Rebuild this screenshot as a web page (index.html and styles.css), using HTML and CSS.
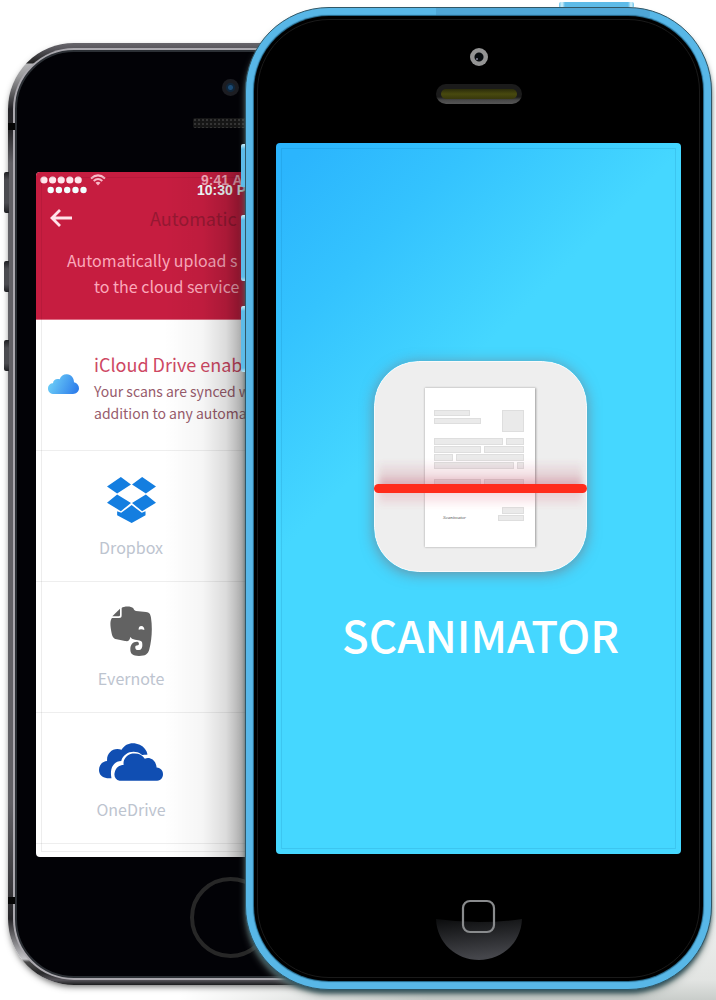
FILE: index.html
```html
<!DOCTYPE html>
<html lang="en">
<head>
<meta charset="utf-8">
<meta name="viewport" content="width=device-width, initial-scale=1">
<title>Scanimator</title>
<link rel="stylesheet" href="styles.css">
</head>
<body>
<main class="stage">
  <section class="phone-back">
    <span class="key key-mute"></span>
    <span class="key key-up"></span>
    <span class="key key-down"></span>
    <span class="antenna antenna-top"></span>
    <span class="antenna antenna-bottom"></span>
    <div class="rim">
      <div class="face-back">
        <div class="bezel-top-back">
          <span class="lens-back"></span>
          <span class="grille"></span>
        </div>
        <div class="screen-back">
          <header class="app-header">
            <div class="status status-app">
              <svg class="dots" width="42" height="8" viewBox="0 0 42 8" fill="#ffe6ec"><circle cx="4" cy="4" r="3.6"/><circle cx="12.6" cy="4" r="3.6"/><circle cx="21.2" cy="4" r="3.6"/><circle cx="29.8" cy="4" r="3.6"/><circle cx="38.2" cy="4" r="3.6"/></svg>
              <svg class="wifi" width="16" height="12" viewBox="0 0 16 12" fill="none" stroke="#f9b9c8" stroke-width="2"><path d="M1 4.5Q8-1.8 15 4.5M3.7 7Q8 3 12.3 7"/><path d="M5.5 8.7Q8 6.700 10.500 8.700L8 11.500Z" fill="#f9b9c8" stroke="none"/></svg>
              <span class="clock-app">9:41 A</span>
            </div>
            <div class="status status-phone">
              <svg class="dots" width="40" height="8" viewBox="0 0 40 8" fill="#f2ffff"><circle cx="3.700" cy="4" r="3.200"/><circle cx="11.900" cy="4" r="3.200"/><circle cx="20.200" cy="4" r="3.200"/><circle cx="28.500" cy="4" r="3.200"/><circle cx="36.500" cy="4" r="3.200"/></svg>
              <span class="clock-phone">10:30 P</span>
            </div>
            <div class="nav">
              <button class="back" aria-label="Back"><svg width="24" height="18" viewBox="0 0 24 18" fill="none" stroke="#ffe3ea" stroke-width="2.800"><path d="M10 1L2 9L10 17M2 9H22"/></svg></button>
              <h1 class="nav-title">Automatic</h1>
            </div>
            <p class="intro"><span class="intro-one">Automatically upload s</span><span class="intro-two">to the cloud service</span></p>
          </header>
          <div class="drive">
            <svg class="drive-icon" width="31" height="20" viewBox="0 0 93 60"><defs><linearGradient id="sky" x1="0" y1=".3" x2="1" y2=".6"><stop offset="0" stop-color="#70d3f8"/><stop offset="1" stop-color="#2f7feb"/></linearGradient></defs><path fill="url(#sky)" d="M19 60C7 60 0 53 0 44C0 34 7 28 15 28C15 18 25 12 35 16C39 5 48 0 57 1C70 2 78 12 78 25C87 27 93 34 93 43C93 53 85 60 75 60Z"/></svg>
            <div class="drive-text">
              <h2 class="drive-title">iCloud Drive enab</h2>
              <p class="drive-note">Your scans are synced w<br>addition to any automa</p>
            </div>
          </div>
          <ul class="services">
            <li class="service">
              <span class="service-icon"><svg width="49" height="46" viewBox="0 0 145 136" fill="#147ee0"><path d="M41 0L71 22L30 49L0 28ZM104 0L74 22L115 49L145 28ZM30 52L71 77L41 101L0 76ZM115 52L74 77L104 101L145 76ZM73 83L103 106L114 101V113L73 136L30 113V101L42 106Z"/></svg></span>
              <span class="service-name">Dropbox</span>
            </li>
            <li class="service">
              <span class="service-icon"><svg width="42" height="50" viewBox="0 0 126 150"><path fill="#626262" d="M35 6C40 1 63-1 70 7C72 11 73 14 78 15L108 18C118 19 121 23 123 35C128 67 125 104 118 130C114 145 106 150 87 150C68 150 61 144 61 130C61 115 69 106 82 107C88 108 88 117 84 118C77 118 75 121 76 126C77 132 82 133 88 132C98 131 98 117 96 108C94 102 78 103 66 98L61 93C59 103 56 107 45 105L20 100C9 97 7 92 4 77C0 56 0 43 6 36L27 36C34 36 35 33 35 27Z"/><path fill="#626262" d="M7 31L30 8V27Q30 31 26 31Z"/><path fill="#fff" d="M86 71Q85 61 94 60Q103 61 103 72Q94 68 86 71Z"/></svg></span>
              <span class="service-name">Evernote</span>
            </li>
            <li class="service">
              <span class="service-icon"><svg width="64" height="38" viewBox="0 0 190 112" fill="#104eb2"><path d="M37 104H24C9 103 0 93 0 80C0 65 10 54 24 53C22 29 43 11 67 20C79-2 103-4 121 5C134 11 142 22 144 34C132 35 127 36 125 33C105 18 73 27 66 53C43 54 31 75 37 104Z"/><path d="M61 112C49 109 43 98 47 86C50 72 61 65 73 65C71 48 83 34 99 31C116 29 128 34 136 46C153 40 169 51 171 72C184 73 190 82 190 92C190 104 181 112 168 112Z"/></svg></span>
              <span class="service-name">OneDrive</span>
            </li>
          </ul>
        </div>
        <div class="bezel-bottom-back"><button class="home-ring" aria-label="Home"></button></div>
      </div>
    </div>
  </section>

  <section class="phone-front">
    <span class="power"></span>
    <span class="tab tab-mute"></span>
    <span class="tab tab-up"></span>
    <span class="tab tab-down"></span>
    <div class="face-front">
      <div class="bezel-top-front">
        <span class="lens-front"></span>
        <span class="speaker"><span class="mesh"></span></span>
      </div>
      <div class="screen-front">
        <svg class="app-icon" width="213" height="211" viewBox="0 0 213 211">
          <defs>
            <linearGradient id="glow-up" x1="0" y1="0" x2="0" y2="1"><stop offset="0" stop-color="#b94960" stop-opacity="0"/><stop offset=".55" stop-color="#b94960" stop-opacity=".16"/><stop offset="1" stop-color="#b94960" stop-opacity=".42"/></linearGradient>
            <linearGradient id="glow-down" x1="0" y1="0" x2="0" y2="1"><stop offset="0" stop-color="#dd6076" stop-opacity=".25"/><stop offset="1" stop-color="#dd6076" stop-opacity="0"/></linearGradient>
            <filter id="soft" x="-10%" y="-10%" width="120%" height="120%"><feGaussianBlur stdDeviation="1"/></filter>
            <filter id="haze" x="-5%" y="-30%" width="110%" height="160%"><feGaussianBlur stdDeviation="3 1"/></filter>
          </defs>
          <rect x=".5" y=".5" width="212" height="210" rx="44" fill="#eee" stroke="#fafafa"/>
          <rect x="51" y="27" width="111" height="159" fill="#777" filter="url(#soft)" opacity=".7"/>
          <rect x="51" y="27" width="110" height="159" fill="#fff"/>
          <g fill="#dedede">
            <path d="M60 49h36v6h-36zM60 57h47v6h-47zM128 49h22v22h-22z"/>
            <path d="M60 77h69v7h-69zM132 77h18v7h-18zM60 85h47v7h-47zM110 85h40v7h-40zM60 93h19v7h-19zM82 93h68v7h-68zM60 101h80v7h-80zM143 101h7v7h-7z"/>
            <path d="M60 118h47v7h-47zM110 118h40v7h-40zM128 146h22v7h-22zM124 154h26v6h-26z"/>
          </g>
          <g fill="#eaeaea">
            <path d="M61 50h34v4h-34zM61 58h45v4h-45zM129 50h20v20h-20z"/>
            <path d="M61 78h67v5h-67zM133 78h16v5h-16zM61 86h45v5h-45zM111 86h38v5h-38zM61 94h17v5h-17zM83 94h66v5h-66zM61 102h78v5h-78zM144 102h5v5h-5z"/>
            <path d="M61 119h45v5h-45zM111 119h38v5h-38zM129 147h20v5h-20zM125 155h24v4h-24z"/>
          </g>
          <text class="signature" x="69" y="158">Scanimator</text>
          <rect x="5" y="98" width="203" height="27" fill="url(#glow-up)" filter="url(#haze)"/>
          <rect x="5" y="130" width="203" height="18" fill="url(#glow-down)" filter="url(#haze)"/>
          <rect x="0" y="123" width="213" height="9" rx="4.500" fill="#ff2b1b"/>
        </svg>
        <h2 class="brand">SCANIMATOR</h2>
      </div>
      <div class="bezel-bottom-front">
        <button class="home-front" aria-label="Home"><svg width="86" height="62" viewBox="0 0 86 62"><defs><linearGradient id="dish" x1="0" y1="0" x2=".2" y2="1"><stop offset="0" stop-color="#0b0c0d"/><stop offset="1" stop-color="#45464b"/></linearGradient></defs><path fill="url(#dish)" d="M0 20Q43 26 86 20C85 44 66 61 43 61S1 44 0 20Z"/><rect x="27" y="2" width="31" height="31" rx="7" fill="none" stroke="#898b8d" stroke-width="2.200"/></svg></button>
      </div>
    </div>
  </section>
</main>
</body>
</html>
```
FILE: styles.css
```css
* { box-sizing: border-box; }

body {
  margin: 0;
  background: #fff;
  font-family: "Noto Sans CJK JP", "Noto Sans", sans-serif;
}

h1, h2, p, ul { margin: 0; padding: 0; font-weight: 400; }
ul { list-style: none; }
button { padding: 0; border: 0; background: none; }
svg { display: block; flex: none; }

.stage {
  display: grid;
  grid-template-columns: 8px 237fr 207fr 260fr 4px;
  min-height: 100vh;
  overflow: hidden;
  background-color: #fff;
  background-image:
    linear-gradient(to right, #fff 25%, rgba(255, 255, 255, 0) 60%),
    linear-gradient(to top, #c9cdca, #e2e4e2 20px, #fff 160px);
  background-position: bottom;
  background-size: 100% 160px;
  background-repeat: no-repeat;
}

/* Dark phone, behind */
.phone-back {
  grid-area: 1 / 2 / 2 / 4;
  position: relative;
  display: flex;
  margin: 43px 0 15px;
  padding: 5px;
  border-radius: 66px;
  background: linear-gradient(#67656b 0, #57555b 6px, #222 20px, #b4b4b6 21px, #98989a 34px, #252428 66px, #29282b 88px, #626166 120px, #626166 760px, #38373a 850px, #262528 876px, #c4c4c8 916px, #4a4a4a 919px, #29292b 930px, #56545a 937px, #1c1c1e 100%);
  box-shadow: 0 3px 7px -2px #555;
}

.rim {
  flex: 1;
  display: flex;
  padding: 2px;
  border-radius: 61px;
  background: #aaa8ae;
}

.face-back {
  flex: 1;
  display: flex;
  flex-direction: column;
  border: 2px solid #2b2f34;
  border-radius: 59px;
  background: #020206;
}

.key {
  position: absolute;
  left: -4px;
  width: 5px;
  height: 31px;
  border-radius: 2px 0 0 2px;
  background: linear-gradient(#202024, #4b4b50 8px, #4b4b50 75%, #202024);
}
.key-mute { top: 129px; height: 41px; }
.key-up { top: 218px; }
.key-down { top: 297px; }

.antenna { position: absolute; left: 0; width: 7px; height: 7px; background: #050505; }
.antenna-top { top: 80px; }
.antenna-bottom { bottom: 81px; }

.bezel-top-back {
  height: 120px;
  padding-top: 27px;
  display: flex;
  flex-direction: column;
  align-items: center;
  gap: 22px;
}

.lens-back {
  width: 17px;
  height: 17px;
  border-radius: 50%;
  background: radial-gradient(circle, #1b4b75 0 2px, #10263a 3px 4px, #1c1d22 5px);
}

.grille {
  width: 74px;
  height: 10px;
  border-radius: 2px;
  background: radial-gradient(#343434 1px, #161616 1px) 0 0 / 4px 4px;
}

.screen-back {
  flex: 1;
  position: relative;
  margin: 0 19px;
  overflow: hidden;
  border-radius: 4px;
  background: #fff;
}
.screen-back::before {
  content: "";
  position: absolute;
  inset: 5px;
  border: 1px solid rgba(0, 0, 0, .07);
}
.screen-back::after {
  content: "";
  position: absolute;
  inset: 0;
  background: linear-gradient(to right, transparent 33%, rgba(0, 0, 0, .04) 43%, rgba(0, 0, 0, .14) 49%, rgba(0, 0, 0, .36) 54%);
  pointer-events: none;
}

.app-header {
  display: grid;
  grid-template-rows: 32px 28px 87px;
  background: #c61d40;
  border-bottom: 1px solid #dd6c83;
}

.status {
  grid-area: 1 / 1;
  display: flex;
  align-self: start;
  align-items: center;
  font-family: "Liberation Sans", Arial, sans-serif;
  font-size: 14px;
  line-height: 16px;
  white-space: nowrap;
}
.status-app { padding: 0 0 0 4px; }
.status-phone { padding: 10px 0 0 11px; }
.wifi { margin-left: 8px; }
.clock-app { margin-left: 95px; color: #f7a9ba; font-weight: 700; }
.clock-phone { margin-left: 110px; color: #f4ffff; font-weight: 700; }

.nav {
  display: flex;
  align-items: center;
  padding-left: 14px;
  gap: 76px;
}
.back { width: 24px; height: 18px; }
.nav-title { color: #951832; font-size: 18px; line-height: 24px; }

.intro { padding-top: 15px; color: #fba9bb; font-size: 16px; line-height: 26px; white-space: nowrap; }
.intro-one, .intro-two { display: block; }
.intro-one { padding-left: 31px; }
.intro-two { padding-left: 58px; }

.drive {
  display: flex;
  gap: 15px;
  min-height: 131px;
  padding: 30px 0 0 12px;
  border-bottom: 1px solid #eee;
}
.drive-icon { margin-top: 24px; }
.drive-text { white-space: nowrap; }
.drive-title { color: #ce4863; font-size: 18px; line-height: 28px; }
.drive-note { padding-top: 2px; color: #985c6c; font-size: 14px; line-height: 22px; }

.service {
  display: flex;
  flex-direction: column;
  align-items: center;
  gap: 12px;
  min-height: 131px;
  padding: 24px 51% 0 0;
  border-bottom: 1px solid #eee;
}
.service-icon { display: flex; align-items: center; height: 50px; }
.service-name { color: #bdc4cf; font-size: 16px; line-height: 20px; }

.bezel-bottom-back { display: flex; justify-content: center; height: 119px; padding-top: 20px; }
.home-ring { width: 81px; height: 81px; border: 4px solid #272727; border-radius: 50%; }

/* Blue phone, in front */
.phone-front {
  grid-area: 1 / 3 / 2 / 5;
  position: relative;
  display: flex;
  margin: 7px 0 10px;
  padding: 8px;
  border: 1px solid #315766;
  border-radius: 84px;
  background: linear-gradient(#4fa6d6, #4fa6d6) 190px 0 / 46% 9px no-repeat, #58b7e7;
  box-shadow: 0 4px 4px -1px #35545c, 0 6px 9px -2px #778783;
}

.face-front {
  flex: 1;
  position: relative;
  display: flex;
  flex-direction: column;
  border-radius: 75px;
  background: #000;
  box-shadow: 0 0 1px 1px #236282;
}
.face-front::before {
  content: "";
  position: absolute;
  inset: 3px;
  border: 1px solid #1a1a1a;
  border-radius: 72px;
  pointer-events: none;
}

.power {
  position: absolute;
  top: -6px;
  right: 77px;
  width: 75px;
  height: 5px;
  border-radius: 2px 2px 0 0;
  background: linear-gradient(to right, #70c5eb, #d5f3fc 3px, #5dbbe8 6px, #5dbbe8 69px, #d5f3fc 72px, #70c5eb);
}

.tab {
  position: absolute;
  left: -5px;
  width: 4px;
  height: 66px;
  border-radius: 2px 0 0 2px;
  background: linear-gradient(#c9eefb, #5dbbe8 5px, #5dbbe8 62px, #b2e2f4);
}
.tab-mute { top: 136px; height: 43px; }
.tab-up { top: 207px; }
.tab-down { top: 298px; }

.bezel-top-front {
  display: flex;
  flex-direction: column;
  align-items: center;
  gap: 18px;
  height: 127px;
  padding-top: 32px;
}
.lens-front {
  width: 18px;
  height: 18px;
  border-radius: 50%;
  background: radial-gradient(circle at 40% 60%, #667 0 1px, transparent 1px), radial-gradient(circle, #080c10 0 4px, #949494 5px);
}
.speaker {
  width: 86px;
  height: 20px;
  padding: 5px;
  border-radius: 10px;
  background: linear-gradient(#1b1b1b 65%, #484848 80%, #555);
}
.mesh {
  display: block;
  height: 10px;
  border-radius: 5px;
  background: linear-gradient(#2b2c0a, #48490f 50%, #38380c);
}

.screen-front {
  flex: 1;
  position: relative;
  display: flex;
  flex-direction: column;
  align-items: center;
  gap: 32px;
  margin: 0 22px;
  padding: 218px 0 0 4px;
  border-radius: 4px;
  background: linear-gradient(135deg, #2bb5fd 3%, #34c3fe 18%, #45d7ff 37%);
}
.screen-front::before {
  content: "";
  position: absolute;
  inset: 5px;
  border: 1px solid rgba(0, 80, 130, .12);
}

.app-icon {
  border-radius: 44px;
  box-shadow: 0 2px 14px rgba(126, 104, 110, .65);
}
.signature { font: italic 5px "Liberation Serif", serif; fill: #555; }
.brand { color: #fff; font-size: 44px; font-weight: 500; line-height: 60px; }

.bezel-bottom-front { display: flex; justify-content: center; height: 127px; padding-top: 45px; }
.home-front { width: 86px; height: 62px; }
```
